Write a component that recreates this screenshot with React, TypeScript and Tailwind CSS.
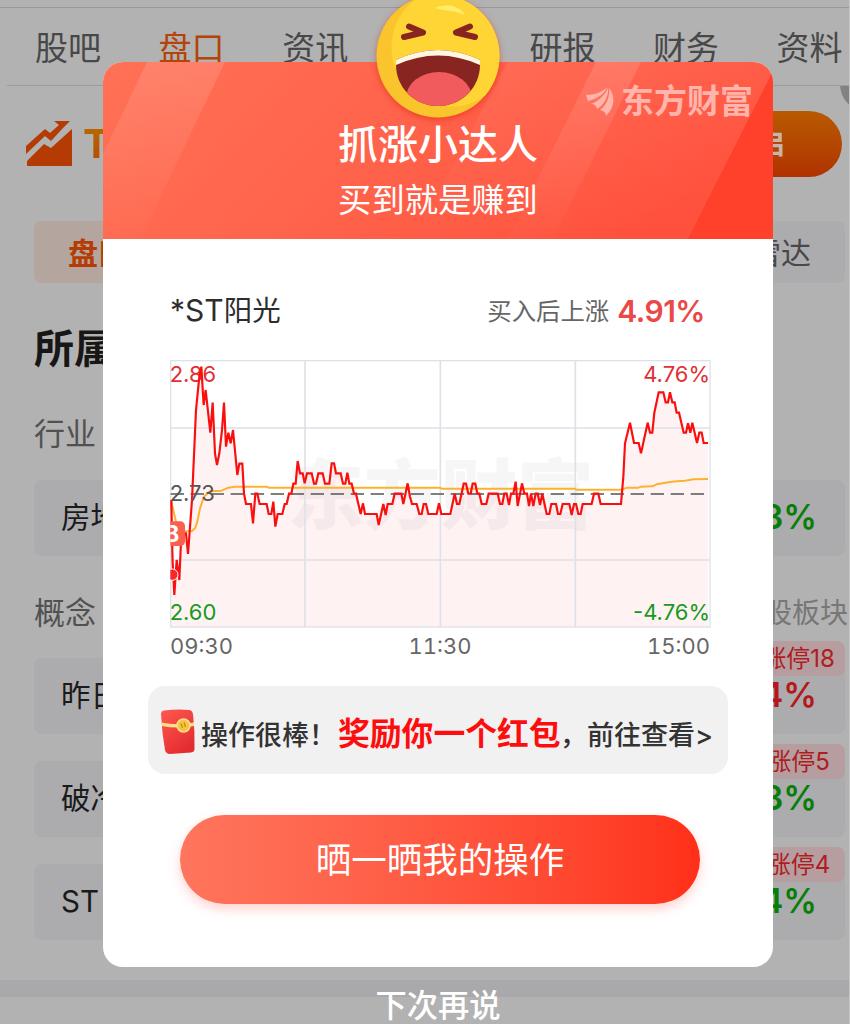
import React from "react";

const PRICE =
  "34,450 36,560 38,640 43,735 50,630 58,690 64,550 78,550 84,612 96,450 108,180 118,80 124,50 131,165 137,120 151,248 158,158 165,310 171,345 178,310 186,240 192,158 198,290 205,248 212,280 219,240 232,375 238,341 247,341 252,430 258,462 273,462 279,520 286,431 292,431 299,462 320,462 326,492 334,492 340,455 346,530 353,492 367,492 374,462 380,462 387,431 394,431 400,401 407,401 413,333 420,370 428,370 434,400 441,370 455,370 462,401 468,401 475,370 488,370 495,401 508,401 515,340 522,340 528,370 542,370 549,401 556,401 562,368 568,401 575,401 582,431 588,431 602,492 609,460 615,492 650,492 656,525 670,462 677,495 683,462 697,462 704,431 724,431 730,462 743,400 750,440 756,462 770,462 778,492 785,492 791,462 798,462 805,492 830,492 837,460 844,492 871,492 884,431 891,462 898,462 911,401 918,401 925,431 932,431 938,401 946,401 952,431 958,431 965,462 979,462 986,431 1013,431 1020,462 1027,462 1033,431 1040,431 1047,465 1053,431 1060,431 1067,395 1073,468 1086,400 1093,431 1101,431 1107,468 1113,431 1120,468 1127,431 1133,431 1140,465 1147,431 1160,492 1168,492 1174,462 1188,462 1194,492 1201,492 1208,462 1228,462 1235,495 1242,462 1248,462 1255,492 1262,492 1268,462 1295,462 1302,431 1315,431 1322,462 1383,462 1390,380 1395,280 1410,218 1422,279 1436,279 1443,310 1463,218 1470,248 1477,248 1483,188 1496,127 1510,127 1517,157 1524,157 1530,127 1537,157 1544,157 1550,188 1557,188 1571,248 1578,248 1584,220 1591,248 1597,218 1611,279 1618,248 1625,248 1631,279 1644,279";

const AVERAGE =
  "34,455 48,515 62,544 95,544 105,535 112,515 120,475 132,440 150,424 185,422 205,413 225,410 320,410 326,413 840,413 845,416 1244,416 1250,419 1385,419 1402,413 1435,413 1443,410 1477,409 1490,403 1530,396 1550,394 1575,392 1600,388 1644,387";

const TABS = ["股吧", "盘口", "资讯", "公告", "研报", "财务", "资料"];

const SECTORS = [
  { name: "昨日涨停", limit: "涨停18", change: "4.74%", up: true },
  { name: "破冷股", limit: "涨停5", change: "-1.13%", up: false },
  { name: "ST 板块", limit: "涨停4", change: "-0.84%", up: false },
];

function TrendIcon() {
  return (
    <svg className="h-[46px] w-[47px] shrink-0" viewBox="0 0 47 46" fill="#b43c04">
      <path d="M0 25 L19 8 L24 12 L33 4 L28 0 H44 L37 7 L25 20 L19 15 L0 33 Z" />
      <path d="M46 8 V45 H1 V40 L18 23 L25 27 Z" />
    </svg>
  );
}

function SectorCard({ name, limit, change, up }: { name: string; limit?: string; change: string; up: boolean }) {
  return (
    <div className="relative flex h-[76px] w-[811px] items-center justify-between rounded-lg bg-[#acacae] pr-[28px] pl-[27px]">
      <span className="text-[29.5px] text-[#1a1a1a]">{name}</span>
      <span className={up ? "text-[33.5px] font-semibold text-[#b5171c]" : "text-[33.5px] font-semibold text-[#087d08]"}>
        {change}
      </span>
      {limit && (
        <span className="absolute -top-[17px] right-0 flex h-[35px] w-[93px] items-center justify-center rounded-lg bg-[#b69d9f] text-[24px] whitespace-nowrap text-[#ad1d21]">
          {limit}
        </span>
      )}
    </div>
  );
}

function StockPage() {
  return (
    <div className="flex h-[1024px] w-[850px] flex-col border-r border-[#c6c6c6] bg-[#b2b2b2]">
      <div className="h-2 shrink-0 border-b border-[#999]" />
      <nav className="ml-[7px] flex h-[78px] shrink-0 items-center border-b border-[#9c9c9c] pt-[3px] pl-[28px]">
        {TABS.map((t, i) => (
          <span
            key={t}
            className={
              i === 1
                ? "w-[123.6px] shrink-0 text-[33px] text-[#b3440a]"
                : "w-[123.6px] shrink-0 text-[33px] text-[#484848]"
            }
          >
            {t}
          </span>
        ))}
      </nav>
      <div className="relative flex h-[115px] shrink-0 items-center justify-between overflow-hidden pr-[7px] pl-[26px]">
        <div className="flex items-center gap-[10px]">
          <TrendIcon />
          <span className="bg-linear-to-b from-[#b86a00] to-[#b44a00] bg-clip-text text-[40px] font-bold text-transparent">
            T0
          </span>
        </div>
        <div className="flex h-[66px] w-[160px] items-center justify-end rounded-full bg-linear-to-b from-[#b85a00] to-[#b03100] pr-[57px] text-[29px] font-bold text-[#c6b5aa]">
          开启
        </div>
        <div className="absolute -top-[30px] -right-[47px] h-[56px] w-[56px] rounded-full bg-[#828282]" />
      </div>
      <div className="mt-[20px] flex h-[62px] shrink-0 justify-between pr-[4px] pl-[34px] text-[30px]">
        <div className="flex w-[130px] items-center rounded-lg bg-[#b4a59e] pt-[2px] pl-[34px] font-bold text-[#b53c04]">
          盘口
        </div>
        <div className="flex w-[130px] items-center justify-end rounded-lg bg-[#acacae] pt-[2px] pr-[34px] text-[#484848]">
          雷达
        </div>
      </div>
      <h2 className="mt-[46px] ml-[34px] h-10 shrink-0 text-[40px] font-bold text-[#171717]">所属板块</h2>
      <div className="mt-[49px] ml-[34px] h-[31px] shrink-0 text-[31px] text-[#515151]">行业</div>
      <div className="mt-[31px] ml-[34px] shrink-0">
        <SectorCard name="房地产" change="-0.43%" up={false} />
      </div>
      <div className="mt-[41px] ml-[34px] flex h-[31px] shrink-0 items-center justify-between pr-[1px] text-[31px] text-[#515151]">
        <span>概念</span>
        <span className="text-[28px] text-[#777]">同股板块</span>
      </div>
      <div className="mt-[30px] ml-[34px] flex shrink-0 flex-col gap-[27px]">
        {SECTORS.map((s) => (
          <SectorCard key={s.name} {...s} />
        ))}
      </div>
      <div className="mt-[40px] h-[17px] shrink-0 bg-[#a9a9ab]" />
    </div>
  );
}

function LaughingFace() {
  return (
    <svg
      className="absolute -top-[69.5px] left-[272px] h-[126px] w-[126px] overflow-visible drop-shadow-[0_2px_3px_rgba(220,30,10,0.5)]"
      viewBox="-63 -63 126 126"
    >
      <defs>
        <clipPath id="face">
          <circle r="61.5" />
        </clipPath>
        <clipPath id="mouth">
          <path d="M-42 4 Q0 -16 42 4 V9 C42 31 24 50 0 50 C-24 50 -42 31 -42 9 Z" />
        </clipPath>
      </defs>
      <circle r="61.5" fill="#fac42c" />
      <circle cx="13" cy="-9" r="59.5" fill="#ffd535" clipPath="url(#face)" />
      <path d="M-3 -48 C9 -53 22 -50 27 -41 C16 -46 7 -45 -3 -48Z" fill="#ffed69" />
      <g clipPath="url(#mouth)">
        <rect x="-44" y="-16" width="88" height="68" fill="#892520" />
        <ellipse cx="1" cy="42" rx="33" ry="26" fill="#f15b5d" />
        <path d="M-44 10 Q0 -11 44 10 V-18 H-44Z" fill="#fff6df" />
      </g>
      <g fill="none" stroke="#892520" strokeWidth="6" strokeLinecap="round" strokeLinejoin="round">
        <path d="M-29 -29.5 L-15 -23.5 L-34 -19" />
        <path d="M32 -29.5 L18 -23.5 L37 -19" />
      </g>
    </svg>
  );
}

function Brand() {
  return (
    <div className="absolute top-[23px] right-[20px] flex items-center gap-[7px] text-[#ffb5ab]">
      <svg className="h-[30px] w-[28px]" viewBox="0 0 28 30" fill="currentColor">
        <path d="M0 8 C9 8 16 5 21 0.5 C18 7 12 11.5 2 14Z" />
        <path d="M5 17 C13 14 19 8 22 1 C23 9 18 18 11 22 C10.5 19 8.500 17 5 17Z" />
        <path d="M23 1 C29.500 9 29 20 20 29 C20.500 26 18 24 14 23 C21 18 24 10 23 1Z" />
      </svg>
      <span className="text-[33px] font-bold">东方财富</span>
    </div>
  );
}

function DialogHeader() {
  return (
    <div className="relative h-[177px] shrink-0">
      <svg className="absolute inset-0 h-full w-full rounded-t-[20px]" viewBox="0 0 670 177" preserveAspectRatio="none">
        <defs>
          <linearGradient id="head" x1="0" y1="0" x2="1" y2="0.25">
            <stop offset="0" stopColor="#ff7156" />
            <stop offset="0.5" stopColor="#ff634b" />
            <stop offset="1" stopColor="#ff4f3a" />
          </linearGradient>
          <linearGradient id="ray" x1="0" y1="0" x2="0" y2="1">
            <stop offset="0" stopColor="#fff" stopOpacity="0.13" />
            <stop offset="1" stopColor="#fff" stopOpacity="0.01" />
          </linearGradient>
        </defs>
        <rect width="670" height="177" fill="url(#head)" />
        <path d="M0 92 L44 0 H122 L37 177 H0Z" fill="url(#ray)" />
        <path d="M493 0 H538 L450 177 H405Z" fill="url(#ray)" />
        <path d="M405 0 H670 V9 L585 177 H310Z" fill="url(#ray)" opacity="0.5" />
        <path d="M670 9 V177 H585Z" fill="#ff3924" opacity="0.65" />
      </svg>
      <Brand />
      <div className="relative flex flex-col items-center pt-[63px] text-white">
        <h1 className="text-[40px] font-medium">抓涨小达人</h1>
        <p className="mt-[19px] text-[33.3px]">买到就是赚到</p>
      </div>
      <LaughingFace />
    </div>
  );
}

function PriceChart() {
  return (
    <svg
      className="h-[268px] w-[541px] shrink-0 font-['Inter',sans-serif]"
      viewBox="30 30 1623 804"
      fontSize="66"
    >
      <defs>
        <clipPath id="plot">
          <rect x="31" y="30" width="1622" height="804" />
        </clipPath>
      </defs>
      <text
        x="382"
        y="520"
        fontSize="230"
        fontWeight="900"
        fill="#f6f6f7"
        className="font-['Noto_Sans_CJK_SC',sans-serif]"
      >
        东方财富
      </text>
      <polygon points={`34,831 ${PRICE} 1644,831`} fill="#f03c50" fillOpacity="0.065" />
      <g fill="none" stroke="#dfe1e8" strokeWidth="5">
        <rect x="32" y="32" width="1618" height="799" strokeWidth="4" />
        <path d="M32 234 H1650 M32 630 H1650 M435 32 V831 M841 32 V831 M1246 32 V831" />
      </g>
      <path d="M32 432 H1644" stroke="#555" strokeWidth="4.5" strokeDasharray="40 20" />
      <polyline points={AVERAGE} fill="none" stroke="#fbb32f" strokeWidth="6" strokeLinejoin="round" />
      <g fill="#e03036">
        <text x="29" y="95">2.86</text>
        <text x="1650" y="95" textAnchor="end">4.76%</text>
      </g>
      <polyline points={PRICE} fill="none" stroke="#fa0f0f" strokeWidth="6.5" strokeLinejoin="miter" />
      <g clipPath="url(#plot)">
        <rect x="0" y="514" width="75" height="74" rx="14" fill="#fb5f4e" />
        <text x="13" y="576" fontSize="68" fontWeight="700" fill="#fff">B</text>
        <circle cx="37" cy="674" r="17" fill="#f8282c" stroke="#fff" strokeWidth="3" />
      </g>
      <text x="29" y="452" fill="#555">2.73</text>
      <g fill="#18991c">
        <text x="29" y="809">2.60</text>
        <text x="1650" y="809" textAnchor="end">-4.76%</text>
      </g>
    </svg>
  );
}

function RedPacket() {
  return (
    <svg className="mt-[4px] h-[46px] w-[34px] shrink-0" viewBox="0 0 34 46">
      <defs>
        <linearGradient id="packet" x1="0" y1="0" x2="0.6" y2="1">
          <stop offset="0" stopColor="#ff5a50" />
          <stop offset="1" stopColor="#e42c30" />
        </linearGradient>
      </defs>
      <path d="M3 1.500 Q16 0 28 1 Q31 1 32 5 Q34 22 33.500 40 Q33.500 43 30 43.500 L9 45 Q5 45 4 41 Q1 24 0 5 Q0 2 3 1.500Z" fill="url(#packet)" />
      <path d="M0.500 13.500 Q16 17 33 13.500 L33 17 Q16 20 1 17Z" fill="#fde08d" />
      <circle cx="22.500" cy="16.500" r="6.500" fill="#f6c443" stroke="#fbe08c" strokeWidth="1.500" />
      <path d="M20 14.500 L21.500 19 M23 13.500 L24.500 18" stroke="#c98716" strokeWidth="1.200" />
    </svg>
  );
}

function ShareDialog() {
  return (
    <section className="mt-[62px] flex h-[905px] w-[670px] shrink-0 flex-col rounded-[20px] bg-white">
      <DialogHeader />
      <div className="flex h-[121px] shrink-0 items-center justify-between pt-[22px] pr-[68px] pl-[67px]">
        <span className="text-[28.5px] text-[#2d2d2d]">
          <span className="text-[30px]">*ST</span>阳光
        </span>
        <div className="flex items-center gap-[8px]">
          <span className="pt-[2px] text-[24.4px] text-[#666]">买入后上涨</span>
          <span className="text-[30px] font-semibold tracking-[-0.5px] text-[#eb4848]">4.91%</span>
        </div>
      </div>
      <div className="flex shrink-0 flex-col pl-[67px]">
        <PriceChart />
        <div className="mt-[7px] flex w-[540px] justify-between text-[22px] text-[#666] tabular-nums">
          <span>09:30</span>
          <span>11:30</span>
          <span>15:00</span>
        </div>
      </div>
      <div className="mt-[29px] ml-[45px] flex h-[88px] w-[580px] shrink-0 items-center rounded-[17px] bg-[#f1f1f1] pl-[13px] font-medium whitespace-nowrap text-[#333]">
        <RedPacket />
        <span className="ml-[6px] flex items-center pt-[11px] text-[27px]">
          <span className="w-[137px]">操作很棒！</span>
          <span className="w-[222px] pb-[3px] text-[31.8px] font-bold text-[#fd0d0d]">奖励你一个红包</span>
          <span className="w-[27px]">，</span>
          <span>前往查看&gt;</span>
        </span>
      </div>
      <button className="mt-[41px] ml-[77px] flex h-[89px] w-[520px] shrink-0 items-center justify-center rounded-full bg-linear-to-r from-[#ff755d] to-[#ff2f18] pt-[2px] text-[35.5px] text-white shadow-[0_5px_12px_rgba(255,50,30,0.22)]">
        晒一晒我的操作
      </button>
    </section>
  );
}

export default function App() {
  return (
    <main className="relative h-[1024px] w-[850px] overflow-hidden font-['Inter','Noto_Sans_CJK_SC',sans-serif] leading-none">
      <StockPage />
      <div className="absolute inset-0 flex flex-col items-center pl-[26px]">
        <ShareDialog />
        <button className="mt-[24px] shrink-0 text-[31.3px] font-medium text-white">下次再说</button>
      </div>
    </main>
  );
}
